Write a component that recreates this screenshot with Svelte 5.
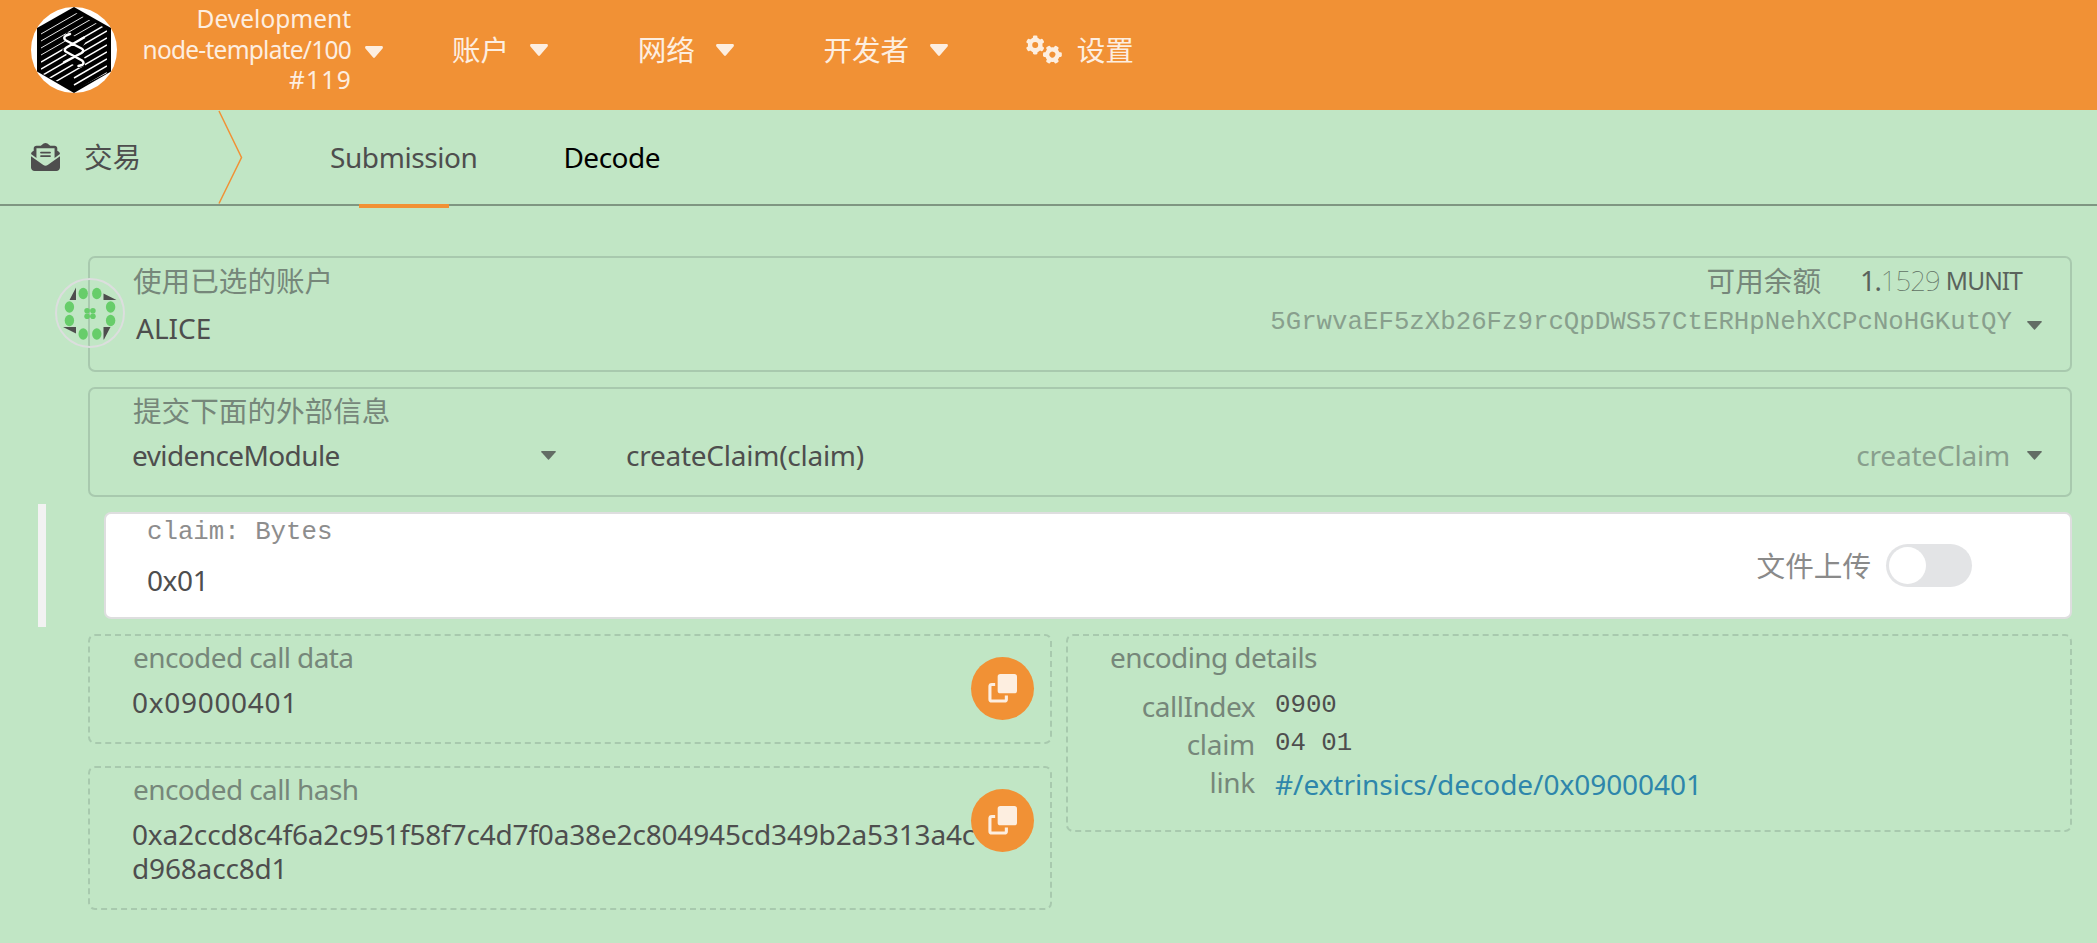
<script>
  const menu = ['账户', '网络', '开发者'];
  const teeth = [0, 60, 120, 180, 240, 300];
  const slats = Array.from({ length: 13 }, (_, i) => 2 + i * 7);
  const dots = [
    [28.2, 15.5], [41.8, 15.5], [14.4, 29], [55.6, 29],
    [14.4, 42.5], [55.6, 42.5], [28.2, 56], [41.8, 56]
  ];
</script>

{#snippet caret(cls)}
  <svg class={cls} viewBox="10 192 300 169" preserveAspectRatio="none"><path fill="currentColor" d="M31.3 192h257.3c17.8 0 26.7 21.5 14.1 34.1L174.1 354.8c-7.8 7.8-20.5 7.8-28.3 0L17.2 226.1C4.6 213.5 13.5 192 31.3 192z" /></svg>
{/snippet}

{#snippet tri()}
  <svg class="tri" viewBox="0 0 15 9"><path fill="currentColor" d="M0.6 0H14.4Q15.200 0.300 14.500 1.200L8 8.500Q7.500 9 7 8.500L0.500 1.200Q-0.200 0.300 0.600 0Z" /></svg>
{/snippet}

{#snippet gear(x, y, turn)}
  <g transform="translate({x} {y}) rotate({turn})">
    <circle r="5.2" fill="none" stroke="currentColor" stroke-width="4.4" />
    {#each teeth as t}
      <rect x="-2.300" y="-9.400" width="4.600" height="4.500" rx="1.300" fill="currentColor" transform="rotate({t})" />
    {/each}
  </g>
{/snippet}

{#snippet copy()}
  <button class="copy" aria-label="copy">
    <svg viewBox="0 0 30 30">
      <rect x="10" y="0" width="20" height="20" rx="2.800" fill="currentColor" />
      <path d="M7.400 10.800H4Q2 10.800 2 12.800V26Q2 28 4 28H17Q19 28 19 26V22.300" fill="none" stroke="currentColor" stroke-width="3.200" />
    </svg>
  </button>
{/snippet}

<header>
  <svg class="logo" viewBox="0 0 86 86">
    <defs><clipPath id="hex"><path d="M10 24L43 5 76 22V66L43 83 10 66Z" /></clipPath></defs>
    <circle cx="43" cy="43" r="43" fill="#fff" />
    <path d="M43 0L80 21V64.500L43 86 6 64.500V21Z" fill="#000" />
    <g clip-path="url(#hex)" stroke="#fff">
      {#each slats as s, i}
        <path d="M{i < 9 ? 10 : 43} {i < 9 ? s + 25 : s + 6}L{i < 4 ? 49 + i * 7 : 76} {i < 4 ? s + 2.500 - i * 4 : s - 13}" stroke-width={i < 4 ? 0.9 : 1.500} />
      {/each}
    </g>
    <path d="M36 25L51 34 55 30 54 36 49 43 54 52V59L48 61 41 57 34 58 32 54 37 49 31 43 37 37 31 32Z" fill="#000" />
    <path d="M39 27L35 28.500Q31.500 31 35 33.500L50.500 41.500Q54 43.500 50.500 46L33 55.300M53 30.500L35.500 40.500Q32 43 35.500 45L51 53.500Q54 56 51 58L47.500 59" fill="none" stroke="#fff" stroke-width="2.500" stroke-linecap="round" stroke-linejoin="round" />
  </svg>
  <div class="chain">
    <span class="c1">Development</span>
    <span class="c2">node-template/100</span>
    <span class="c3">#119</span>
  </div>
  {@render caret('caret first')}
  <nav>
    {#each menu as item}
      <a><span class="cjk">{item}</span>{@render caret('caret')}</a>
    {/each}
    <a class="settings">
      <svg viewBox="0 0 36 30">{@render gear(9.2, 10, 0)}{@render gear(26.400, 19.600, 30)}</svg>
      <span class="cjk">设置</span>
    </a>
  </nav>
</header>

<div class="tabs">
  <svg class="mail" viewBox="0 0 512 512" preserveAspectRatio="none"><path fill="currentColor" d="M215.400 96H96V184.400 273.400L.2 202.500c1.600-18.100 10.900-34.900 25.700-45.800L48 140.300V96c0-26.500 21.500-48 48-48h76.600l49.900-36.900C232.200 3.900 243.900 0 256 0s23.800 3.900 33.500 11L339.400 48H416c26.500 0 48 21.500 48 48v44.300l22.100 16.400c14.800 10.900 24.100 27.700 25.700 45.800L416 273.400V96H215.400zM0 448V242.100L217.600 403.300c11.100 8.200 24.600 12.700 38.400 12.700s27.300-4.400 38.400-12.700L512 242.100V448c0 35.300-28.700 64-64 64H64c-35.300 0-64-28.700-64-64zM176 160H336c8.800 0 16 7.200 16 16s-7.200 16-16 16H176c-8.800 0-16-7.200-16-16s7.200-16 16-16zm0 64H336c8.800 0 16 7.200 16 16s-7.200 16-16 16H176c-8.800 0-16-7.200-16-16s7.200-16 16-16z" /></svg>
  <span class="cjk title">交易</span>
  <svg class="chevron" viewBox="0 0 25 94"><path d="M1 1L23.500 47.500 1 93.500" fill="none" stroke="#f19135" stroke-width="1.500" /></svg>
  <a class="tab active">Submission</a>
  <a class="tab decode">Decode</a>
</div>

<main>
  <section class="card account">
    <svg class="ident" viewBox="0 0 70 70">
      <circle cx="35" cy="35" r="34" fill="none" stroke="#dcdede" stroke-width="2" />
      <path d="M21 9.500V22H14.500ZM48.500 15.500L61.500 22H48.500ZM8 49H21V55.500ZM48.500 49H55.500L49 61.500H48.500Z" fill="#4e4e4e" />
      {#each dots as [x, y]}<ellipse cx={x} cy={y} rx="4.700" ry="5.800" fill="#67cd6a" />{/each}
      {#each [[32.100, 32.800], [37.900, 32.800], [32.100, 38.200], [37.900, 38.200]] as [x, y]}<circle cx={x} cy={y} r="2.800" fill="#67cd6a" />{/each}
    </svg>
    <div class="left">
      <div class="label cjk">使用已选的账户</div>
      <div class="value alice">ALICE</div>
    </div>
    <div class="right">
      <div class="balance"><span class="cjk label">可用余额</span><span class="amount">1.<i>1529</i></span><span class="unit">MUNIT</span></div>
      <div class="address"><code>5GrwvaEF5zXb26Fz9rcQpDWS57CtERHpNehXCPcNoHGKutQY</code>{@render tri()}</div>
    </div>
  </section>

  <section class="card method">
    <div class="label cjk">提交下面的外部信息</div>
    <div class="selects">
      <div class="module"><span>evidenceModule</span>{@render tri()}</div>
      <div class="call"><span class="sig">createClaim(claim)</span><span class="name">createClaim</span>{@render tri()}</div>
    </div>
  </section>

  <div class="params">
    <section class="field">
      <div>
        <div class="mono type">claim: Bytes</div>
        <div class="value hex">0x01</div>
      </div>
      <div class="upload"><span class="cjk">文件上传</span><span class="toggle"></span></div>
    </section>
  </div>

  <div class="outputs">
    <div class="encoded">
      <section class="card dashed data">
        <div class="label">encoded call data</div>
        <div class="value digits">0x09000401</div>
        {@render copy()}
      </section>
      <section class="card dashed hash">
        <div class="label">encoded call hash</div>
        <div class="value digest">0xa2ccd8c4f6a2c951f58f7c4d7f0a38e2c804945cd349b2a5313a4cd968acc8d1</div>
        {@render copy()}
      </section>
    </div>
    <section class="card dashed details">
      <div class="label">encoding details</div>
      <div class="grid">
        <span class="key index">callIndex</span><span class="mono">0900</span>
        <span class="key">claim</span><span class="mono">04 01</span>
        <span class="key">link</span><a class="link">#/extrinsics/decode/0x09000401</a>
      </div>
    </section>
  </div>
</main>

<style>
  :global(body) {
    background: #c1e6c5;
    color: #4e4e4e;
    font: 28px/34px "Noto Sans", "Noto Sans CJK SC", sans-serif;
    overflow: hidden;
  }
  svg { display: block; flex: none; }
  .cjk { font-size: 28.6px; font-weight: 400; white-space: nowrap; }

  header {
    box-sizing: border-box;
    height: 110px;
    padding: 0 0 10px 31px;
    display: flex;
    align-items: center;
    background: #f19135;
    color: #fdeee0;
  }
  .logo { width: 86px; height: 86px; }
  .chain {
    width: 234px;
    display: flex;
    flex-direction: column;
    align-items: flex-end;
    font-size: 24.5px;
    line-height: 30.6px;
  }
  .c1 { letter-spacing: 0; }
  .c2 { letter-spacing: -0.75px; }
  .c3 { letter-spacing: 1.3px; margin-right: -1px; }
  .caret { width: 18px; height: 12px; }
  .first { margin: 3px 0 0 14px; }
  nav { display: flex; align-items: center; margin-left: 69px; }
  nav a { display: flex; align-items: center; gap: 21px; margin-right: 89.5px; }
  .settings { gap: 15px; margin: 0 0 0 -12px; }
  .settings svg { width: 36px; height: 30px; }

  .tabs {
    height: 94px;
    display: flex;
    align-items: center;
    padding-left: 31px;
    border-bottom: 2px solid #7f9682;
  }
  .mail { width: 29px; height: 28px; }
  .title { width: 56px; margin: 0 78px 0 24px; }
  .chevron { width: 25px; height: 94px; margin-right: 87px; }
  .tab { letter-spacing: -0.42px; }
  .active { position: relative; }
  .active::after {
    content: "";
    position: absolute;
    left: 29px;
    top: 64px;
    width: 90px;
    height: 4px;
    background: #f19135;
  }
  .decode { margin-left: 86px; color: #000; letter-spacing: -0.5px; }

  main {
    display: flex;
    flex-direction: column;
    gap: 15px;
    padding: 50px 25px 0 38px;
  }
  .card {
    position: relative;
    box-sizing: border-box;
    border: 2px solid #a8c9ae;
    border-radius: 7px;
  }
  .label { color: #76877a; white-space: nowrap; }
  .mono, code { font-family: "Liberation Mono", monospace; font-size: 25.75px; }

  .account {
    height: 116px;
    margin-left: 50px;
    padding: 6px 28px 0 43px;
    display: flex;
    justify-content: space-between;
  }
  .ident { position: absolute; left: -35px; top: 20px; width: 70px; height: 70px; }
  .alice { margin: 13px 0 0 3px; }
  .right { display: flex; flex-direction: column; align-items: flex-end; }
  .balance { display: flex; margin-right: 20px; color: #5a635c; }
  .amount { margin-left: 39px; font-size: 27.5px; letter-spacing: -1.2px; }
  .amount i { font-style: normal; font-weight: 100; letter-spacing: -0.9px; color: #5f7063; }
  .unit { margin-left: 6px; font-size: 24.5px; letter-spacing: -0.9px; }
  .address { display: flex; align-items: center; gap: 15px; height: 34px; margin-top: 8px; }
  code { color: #889f8d; line-height: 34px; }
  .tri { width: 15px; height: 9px; color: #636d65; }
  .address .tri { margin-top: 5px; }

  .method { height: 110px; margin-left: 50px; padding: 5px 28px 0 42px; }
  .method .label { margin-left: 1px; }
  .selects { display: flex; margin-top: 10px; }
  .module { width: 424px; display: flex; align-items: center; justify-content: space-between; letter-spacing: -0.6px; }
  .call { flex: 1; display: flex; align-items: center; margin-left: 70px; }
  .sig { flex: 1; letter-spacing: -0.25px; }
  .name { margin-right: 17px; color: #889f8d; letter-spacing: -0.2px; }

  .params { margin: -8px 0; padding: 8px 0 8px 58px; border-left: 8px solid #f2f2f2; }
  .field {
    box-sizing: border-box;
    height: 107px;
    padding: 2px 98px 0 41px;
    display: flex;
    justify-content: space-between;
    border: 2px solid #dededf;
    border-radius: 7px;
    background: #fff;
  }
  .type { color: #8d8d8d; }
  .hex { margin-top: 13px; letter-spacing: -0.4px; }
  .upload { display: flex; align-items: center; gap: 15px; color: #8a8a8a; padding-bottom: 2px; }
  .toggle { width: 86px; height: 43px; border-radius: 22px; background: #e3e4e6; display: flex; align-items: center; }
  .toggle::before { content: ""; width: 37px; height: 37px; margin-left: 3px; border-radius: 50%; background: #fff; }

  .outputs { display: flex; align-items: flex-start; gap: 14px; margin-left: 50px; }
  .encoded { width: 964px; display: flex; flex-direction: column; gap: 22px; }
  .dashed { border-style: dashed; padding: 4px 0 0 42px; }
  .dashed .label { margin-left: 1px; letter-spacing: -0.6px; }
  .dashed .value { margin-top: 11px; }
  .data { height: 110px; }
  .hash { height: 144px; }
  .digits { letter-spacing: 0.7px; }
  .digest { width: 856px; letter-spacing: -0.17px; word-break: break-all; }
  .copy {
    position: absolute;
    right: 16px;
    top: 21px;
    width: 63px;
    height: 63px;
    padding: 0;
    display: flex;
    align-items: center;
    justify-content: center;
    border: 0;
    border-radius: 50%;
    background: #f19135;
    color: #fdeee0;
  }
  .copy svg { width: 29px; height: 29px; }
  .details { flex: 1; height: 198px; padding-left: 41px; }
  .grid {
    display: grid;
    grid-template-columns: 146px 1fr;
    column-gap: 20px;
    grid-auto-rows: 38px;
    margin-top: 15px;
  }
  .key { text-align: right; color: #76877a; letter-spacing: -0.3px; }
  .index { letter-spacing: -0.5px; }
  .link { color: #2e86ab; margin-top: 2px; letter-spacing: -0.05px; }
</style>
